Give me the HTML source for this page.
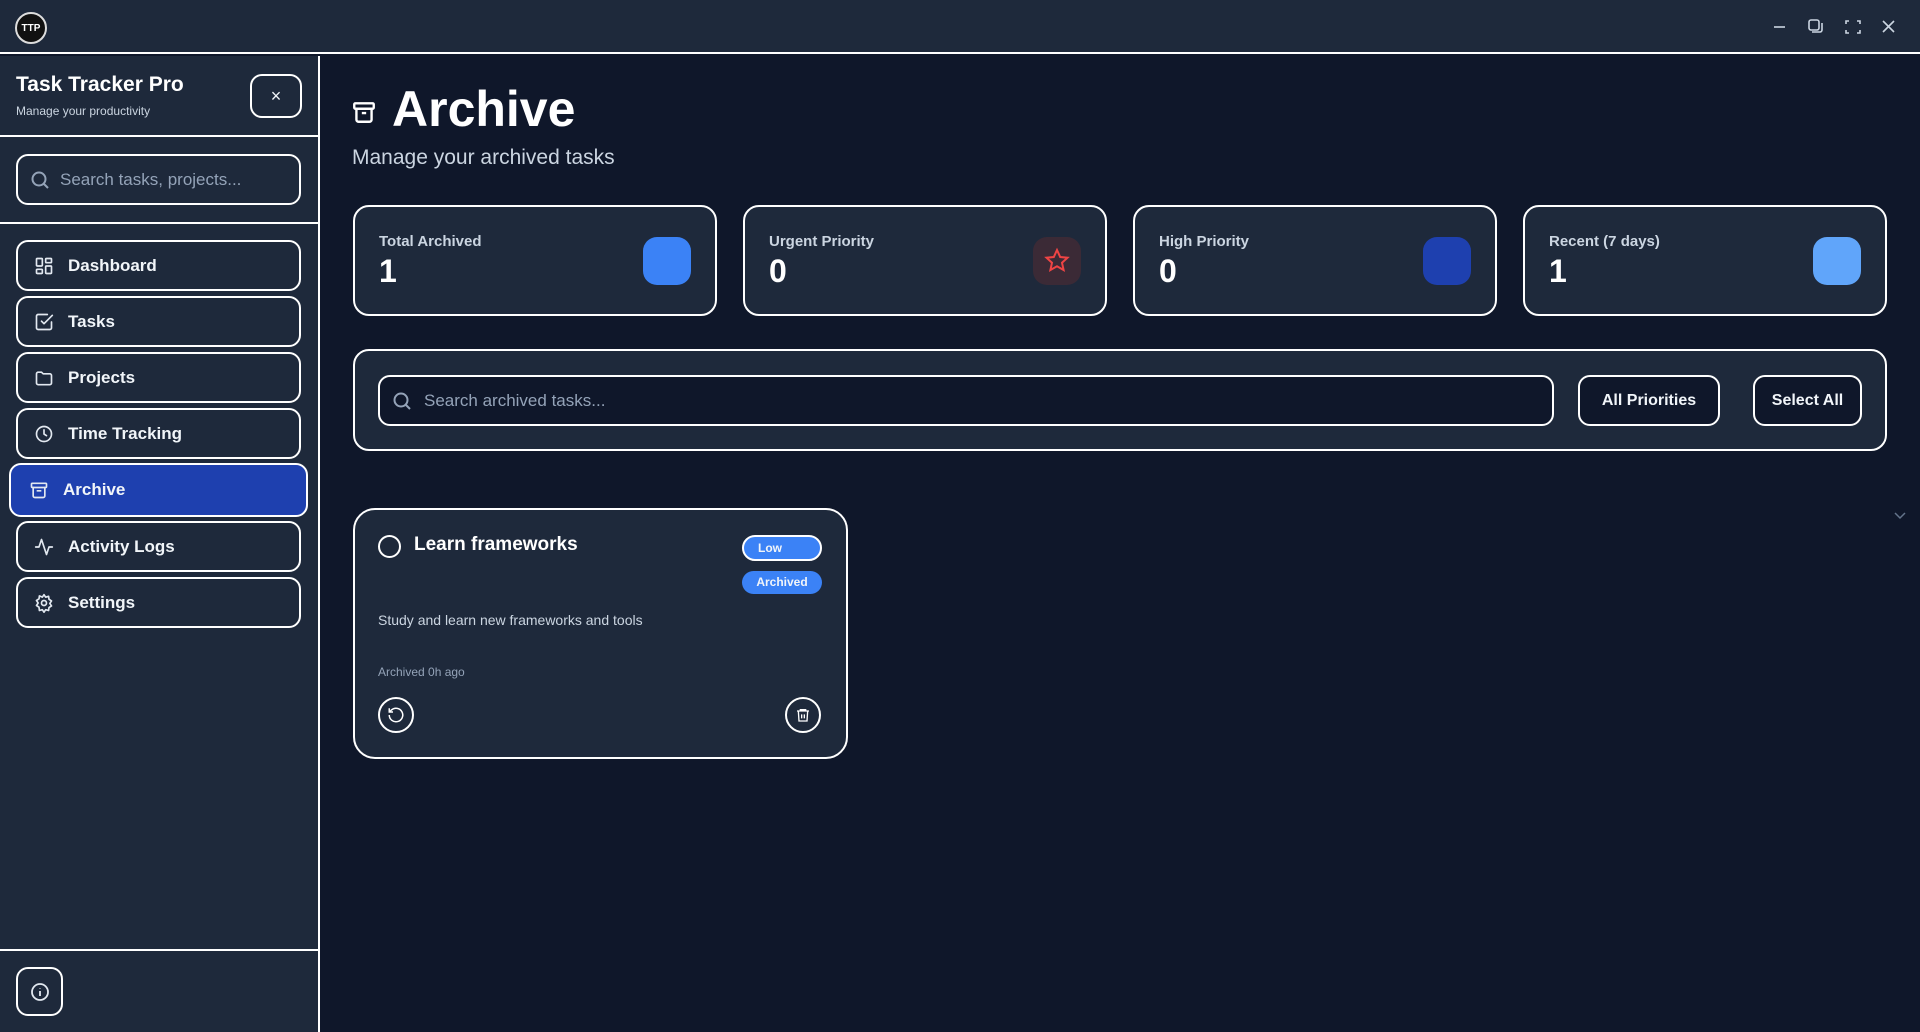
<!DOCTYPE html>
<html><head><meta charset="utf-8"><style>
*{box-sizing:border-box;margin:0;padding:0}
body{width:1920px;height:1032px;background:#0f172a;font-family:"Liberation Sans",sans-serif;color:#f1f5f9;position:relative;overflow:hidden}
.abs{position:absolute}
.top{left:0;top:0;width:1920px;height:54px;background:#1e293b;border-bottom:2px solid #fff}
.side{left:0;top:56px;width:320px;height:976px;background:#1e293b;border-right:2px solid #fff}
.hr{left:0;width:318px;height:2px;background:#fff}
.nav{left:16px;width:285px;height:51px;border:2px solid #fff;border-radius:12px;display:flex;align-items:center;padding-left:16px;font-weight:bold;font-size:17px;color:#f1f5f9}
.nav svg{width:20px;height:20px;margin-right:14px;fill:none;stroke:#e2e8f0;stroke-width:2;stroke-linecap:round;stroke-linejoin:round}
.card{border:2px solid #fff;border-radius:16px;background:#1e293b}
.stat{top:205px;width:364px;height:111px}
.stat .l{position:absolute;left:24px;top:26px;font-size:15px;color:#cbd5e1;font-weight:bold}
.stat .v{position:absolute;left:24px;top:46px;font-size:32px;font-weight:bold;color:#fff}
.stat .i{position:absolute;right:24px;top:30px;width:48px;height:48px;border-radius:14px}
.btn{border:2px solid #fff;border-radius:12px;background:#0f172a;display:flex;align-items:center;justify-content:center;font-size:16px;font-weight:bold}
</style></head><body>
<div class="abs top"></div>
<div class="abs" style="left:15px;top:12px;width:32px;height:32px;border-radius:50%;background:#111;border:2px solid #ddd;display:flex;align-items:center;justify-content:center;font-size:10px;font-weight:bold;color:#fff">TTP</div>
<svg class="abs" style="left:1770px;top:17px" width="140" height="20" fill="none" stroke="#cbd5e1" stroke-width="1.6">
<line x1="4" y1="10" x2="15" y2="10"/>
<rect x="39" y="3" width="10" height="10" rx="2"/><path d="M42 15h8a2 2 0 0 0 2-2V6"/>
<path d="M76 7V4h3M87 4h3v3M90 13v3h-3M79 16h-3v-3"/>
<path d="M113 4l11 11M124 4l-11 11"/>
</svg>

<div class="abs side"></div>
<div class="abs" style="left:16px;top:73px;font-size:21px;font-weight:bold;color:#fff">Task Tracker Pro</div>
<div class="abs" style="left:16px;top:104px;font-size:12px;color:#cbd5e1">Manage your productivity</div>
<div class="abs btn" style="left:250px;top:74px;width:52px;height:44px;background:#1e293b;font-weight:normal;font-size:18px">×</div>
<div class="abs hr" style="top:135px"></div>
<div class="abs" style="left:16px;top:154px;width:285px;height:51px;border:2px solid #fff;border-radius:12px;display:flex;align-items:center;padding-left:12px;color:#94a3b8;font-size:17px">
<svg width="20" height="20" fill="none" stroke="#94a3b8" stroke-width="2" style="margin-right:10px"><circle cx="9" cy="9" r="6.5"/><path d="M14 14l4 4"/></svg>Search tasks, projects...</div>
<div class="abs hr" style="top:222px"></div>

<div class="abs nav" style="top:240px"><svg viewBox="0 0 24 24"><rect x="3" y="3" width="7" height="9" rx="1"/><rect x="14" y="3" width="7" height="5" rx="1"/><rect x="14" y="12" width="7" height="9" rx="1"/><rect x="3" y="16" width="7" height="5" rx="1"/></svg>Dashboard</div>
<div class="abs nav" style="top:296px"><svg viewBox="0 0 24 24"><path d="M9 11l3 3L22 4"/><path d="M21 12v7a2 2 0 0 1-2 2H5a2 2 0 0 1-2-2V5a2 2 0 0 1 2-2h11"/></svg>Tasks</div>
<div class="abs nav" style="top:352px"><svg viewBox="0 0 24 24"><path d="M3 7a2 2 0 0 1 2-2h4l2 2h8a2 2 0 0 1 2 2v9a2 2 0 0 1-2 2H5a2 2 0 0 1-2-2z"/></svg>Projects</div>
<div class="abs nav" style="top:408px"><svg viewBox="0 0 24 24"><circle cx="12" cy="12" r="9"/><path d="M12 7v5l3 2"/></svg>Time Tracking</div>
<div class="abs nav" style="left:9px;top:463px;width:299px;height:54px;background:#1e40af;padding-left:18px"><svg viewBox="0 0 24 24"><rect x="3" y="4" width="18" height="5" rx="1"/><path d="M5 9v10a2 2 0 0 0 2 2h10a2 2 0 0 0 2-2V9M10 13h4"/></svg>Archive</div>
<div class="abs nav" style="top:521px"><svg viewBox="0 0 24 24"><path d="M22 12h-4l-3 9L9 3l-3 9H2"/></svg>Activity Logs</div>
<div class="abs nav" style="top:577px"><svg viewBox="0 0 24 24"><circle cx="12" cy="12" r="3"/><path d="M12 2l2 3 3.5-1 .5 3.5 3 2-2 3 2 3-3 2-.5 3.5-3.5-1-2 3-2-3-3.5 1L6 17l-3-2 2-3-2-3 3-2 .5-3.5L10 5z"/></svg>Settings</div>
<div class="abs hr" style="top:949px"></div>
<div class="abs btn" style="left:16px;top:967px;width:47px;height:49px;background:#1e293b"><svg width="20" height="20" fill="none" stroke="#e2e8f0" stroke-width="1.8"><circle cx="10" cy="10" r="8"/><path d="M10 9v5M10 6v.5"/></svg></div>

<svg class="abs" style="left:351px;top:99px" width="26" height="26" viewBox="0 0 24 24" fill="none" stroke="#fff" stroke-width="2.2"><rect x="3" y="4" width="18" height="5" rx="1"/><path d="M5 9v10a2 2 0 0 0 2 2h10a2 2 0 0 0 2-2V9M10 13h4"/></svg>
<div class="abs" style="left:392px;top:80px;font-size:50px;font-weight:bold;color:#fff">Archive</div>
<div class="abs" style="left:352px;top:146px;font-size:21px;color:#cbd5e1">Manage your archived tasks</div>

<div class="abs card stat" style="left:353px"><div class="l">Total Archived</div><div class="v">1</div><div class="i" style="background:#3b82f6"></div></div>
<div class="abs card stat" style="left:743px"><div class="l">Urgent Priority</div><div class="v">0</div><div class="i" style="background:#3b2a36"><svg width="48" height="48" viewBox="0 0 48 48" fill="none" stroke="#ef4444" stroke-width="2"><path d="M24 13l3.2 7 7.3.7-5.5 5 1.6 7.3L24 29.3 17.4 33l1.6-7.3-5.5-5 7.3-.7z"/></svg></div></div>
<div class="abs card stat" style="left:1133px"><div class="l">High Priority</div><div class="v">0</div><div class="i" style="background:#1e40af"></div></div>
<div class="abs card stat" style="left:1523px"><div class="l">Recent (7 days)</div><div class="v">1</div><div class="i" style="background:#60a5fa"></div></div>

<div class="abs card" style="left:353px;top:349px;width:1534px;height:102px"></div>
<div class="abs" style="left:378px;top:375px;width:1176px;height:51px;border:2px solid #fff;border-radius:12px;background:#0f172a;display:flex;align-items:center;padding-left:12px;color:#94a3b8;font-size:17px">
<svg width="20" height="20" fill="none" stroke="#94a3b8" stroke-width="2" style="margin-right:12px"><circle cx="9" cy="9" r="6.5"/><path d="M14 14l4 4"/></svg>Search archived tasks...</div>
<div class="abs btn" style="left:1578px;top:375px;width:142px;height:51px">All Priorities</div>
<div class="abs btn" style="left:1753px;top:375px;width:109px;height:51px">Select All</div>
<svg class="abs" style="left:1893px;top:511px" width="14" height="10" fill="none" stroke="#64748b" stroke-width="1.5"><path d="M2 2l5 5 5-5"/></svg>

<div class="abs card" style="left:353px;top:508px;width:495px;height:251px;border-radius:22px"></div>
<div class="abs" style="left:378px;top:535px;width:23px;height:23px;border:2px solid #fff;border-radius:50%"></div>
<div class="abs" style="left:414px;top:534px;font-size:19px;font-weight:bold;color:#fff">Learn frameworks</div>
<div class="abs" style="left:742px;top:535px;width:80px;height:26px;border:2px solid #fff;border-radius:13px;background:#3b82f6;font-size:12px;font-weight:bold;padding:4px 0 0 14px">Low</div>
<div class="abs" style="left:742px;top:571px;width:80px;height:23px;border-radius:12px;background:#3b82f6;font-size:12px;font-weight:bold;text-align:center;line-height:23px">Archived</div>
<div class="abs" style="left:378px;top:612px;font-size:14px;color:#cbd5e1">Study and learn new frameworks and tools</div>
<div class="abs" style="left:378px;top:665px;font-size:12px;color:#94a3b8">Archived 0h ago</div>
<div class="abs btn" style="left:378px;top:697px;width:36px;height:36px;border-radius:50%;background:#1e293b"><svg width="18" height="18" viewBox="0 0 24 24" fill="none" stroke="#fff" stroke-width="2"><path d="M3 12a9 9 0 1 0 3-6.7L3 8M3 3v5h5"/></svg></div>
<div class="abs btn" style="left:785px;top:697px;width:36px;height:36px;border-radius:50%;background:#1e293b"><svg width="16" height="18" viewBox="0 0 24 24" fill="none" stroke="#fff" stroke-width="2"><path d="M3 6h18M8 6V4h8v2M5 6l1 15h12l1-15M10 11v6M14 11v6"/></svg></div>
</body></html>
